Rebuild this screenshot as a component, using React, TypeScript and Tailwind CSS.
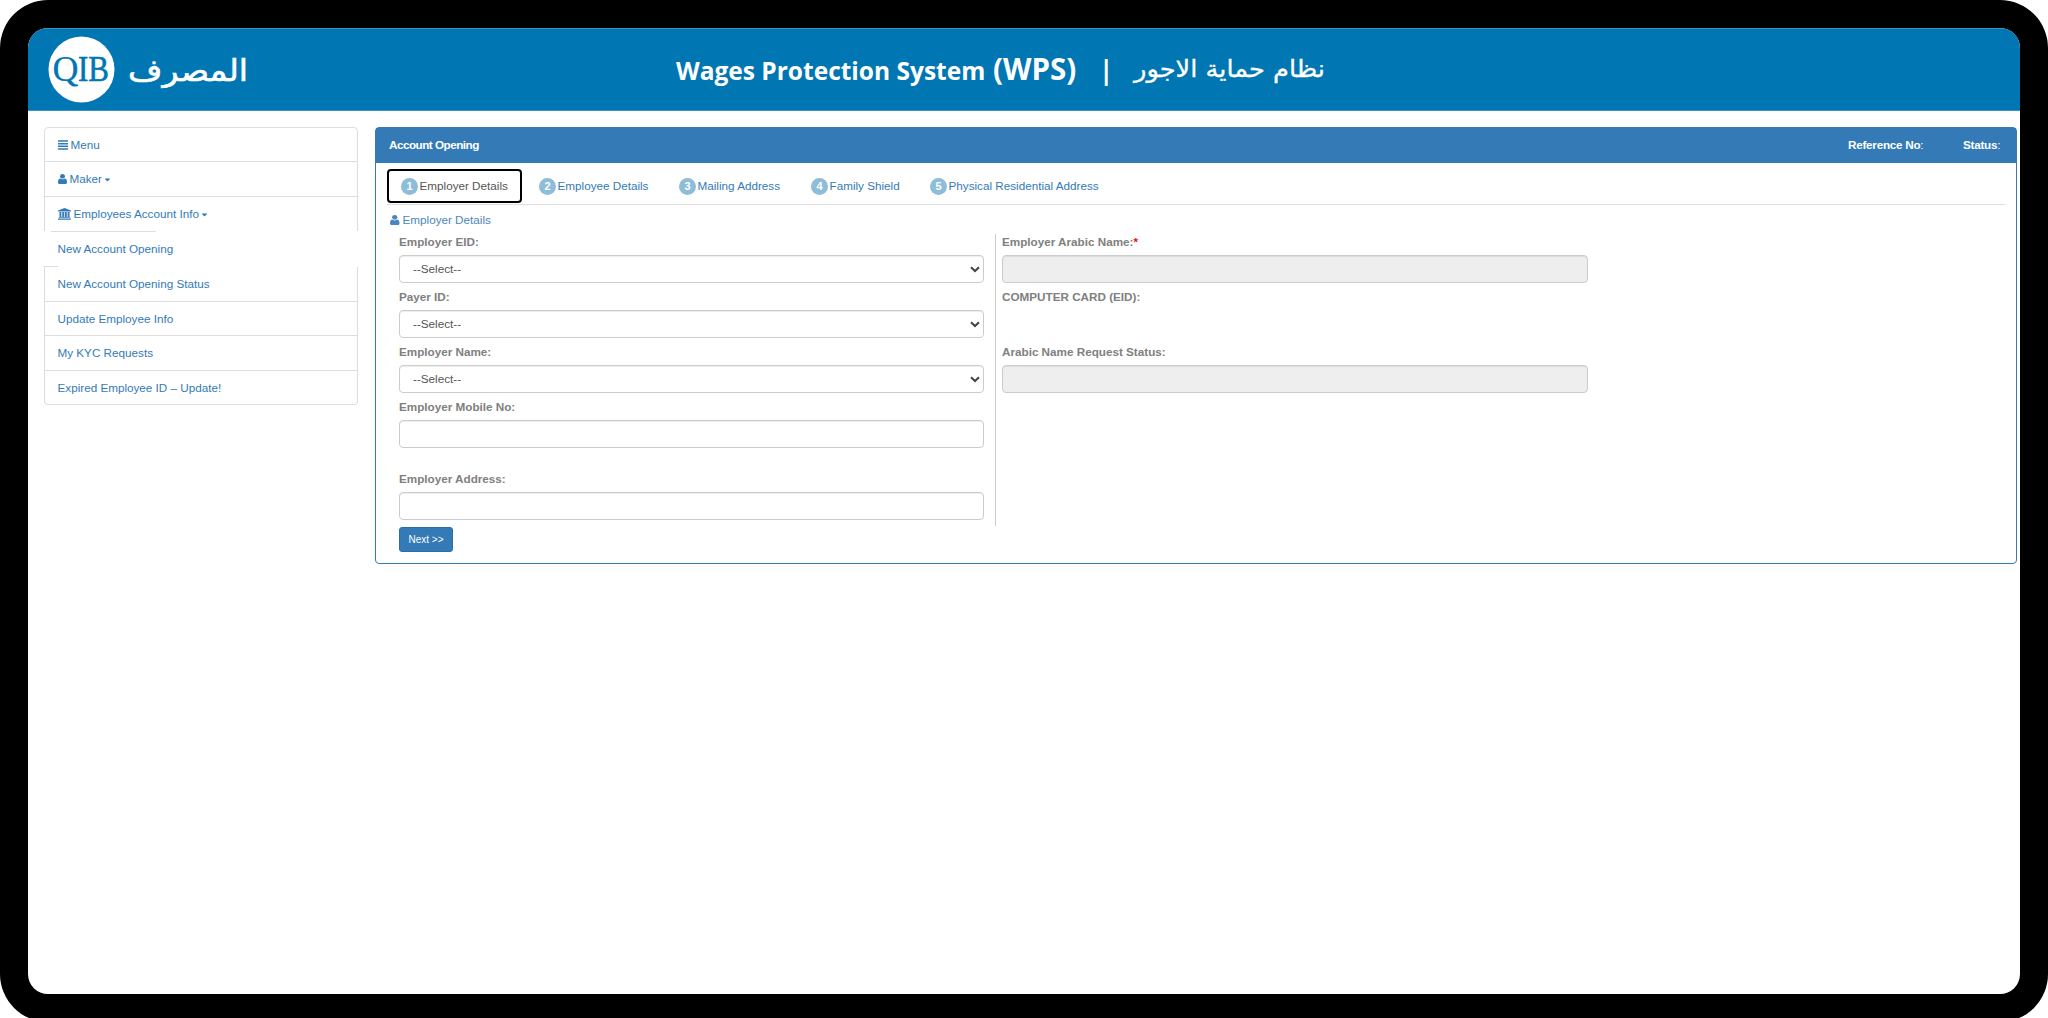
import type { ReactNode } from 'react'
import { FaCaretDown } from 'react-icons/fa'

const STEPS = [
  { label: 'Employer Details', className: 'w-[138px]' },
  { label: 'Employee Details', className: 'w-[140px]' },
  { label: 'Mailing Address', className: 'w-[132px]' },
  { label: 'Family Shield', className: 'w-[119px]' },
  { label: 'Physical Residential Address', className: 'w-[190px]' },
]

function MenuIcon({ className }: { className: string }) {
  return (
    <svg viewBox="0 0 10 10" fill="currentColor" className={className}>
      <path d="M0 .2h10v1.5H0zM0 2.9h10v1.5H0zM0 5.6h10v1.5H0zM0 8.3h10v1.5H0z" />
    </svg>
  )
}

function UserIcon({ className }: { className: string }) {
  return (
    <svg
      viewBox="0 128 1280 1536"
      preserveAspectRatio="none"
      fill="currentColor"
      className={className}
    >
      <circle cx="640" cy="490" r="350" />
      <path d="M1280 1399q0 109-62.5 187t-150.5 78h-854q-88 0-150.5-78t-62.5-187q0-85 8.5-160.5t31.5-152 58.5-131 94-89 134.5-34.5q131 128 313 128t313-128q76 0 134.5 34.5t94 89 58.5 131 31.5 152 8.5 160.5z" />
    </svg>
  )
}

function BankIcon({ className }: { className: string }) {
  return (
    <svg viewBox="0 0 13 12" fill="currentColor" className={className}>
      <path d="M6.5 0 13 2.5v.9H0v-.9zM1.5 4h1.9v5H1.5zM4.3 4h1.9v5H4.3zM6.9 4h1.9v5H6.9zM9.6 4h1.9v5H9.6zM.8 9.2h11.4v.9H.8zM0 10.6h13v1.2H0z" />
    </svg>
  )
}

function Logo() {
  return (
    <svg width="204" height="68" viewBox="0 0 204 68" role="img" aria-label="QIB">
      <circle cx="33.5" cy="33.5" r="33" fill="#fff" />
      <g fill="#0076b3" stroke="#0076b3" fontSize="36" fontFamily="'Liberation Serif', serif">
        <text x="4.5" y="45" strokeWidth="0.2">
          Q
        </text>
        <text
          x="30"
          y="45"
          textLength="31"
          lengthAdjust="spacingAndGlyphs"
          strokeWidth="0.6"
        >
          IB
        </text>
      </g>
      <text
        x="80"
        y="45"
        fontSize="30"
        textLength="120"
        lengthAdjust="spacingAndGlyphs"
        direction="rtl"
        textAnchor="end"
        fill="#fff"
        stroke="#fff"
        strokeWidth="0.6"
        fontFamily="'DejaVu Sans', sans-serif"
      >
        المصرف
      </text>
    </svg>
  )
}

function Header() {
  return (
    <header className="flex h-[83px] border-y border-[#3a93c4] bg-[#0076b3] pl-5 text-white">
      <div className="w-[628px] shrink-0 pt-[7px]">
        <Logo />
      </div>
      <h1 className="flex h-[81px] items-baseline pt-[22px] font-['Open_Sans',sans-serif] font-bold whitespace-nowrap">
        <span className="w-[317px] text-[24.5px] leading-[36px]">Wages Protection System</span>
        <span className="w-[106px] text-[29.5px] leading-[36px]">(WPS)</span>
        <span className="w-[35px] text-[26px] leading-[36px]">|</span>
        <svg width="196" height="40" className="overflow-visible self-start">
          <text
            x="0"
            y="26"
            fontSize="24"
            textLength="191"
            lengthAdjust="spacingAndGlyphs"
            direction="rtl"
            textAnchor="end"
            fill="#fff"
            stroke="#fff"
            strokeWidth="0.3"
            fontWeight="400"
            fontFamily="'DejaVu Sans', sans-serif"
          >
            نظام حماية الاجور
          </text>
        </svg>
      </h1>
    </header>
  )
}

function MenuItem({ children, className }: { children: ReactNode; className: string }) {
  return (
    <li className={`flex items-center border-[#ddd] pl-[12.5px] ${className}`}>
      <a className="flex items-center whitespace-nowrap">{children}</a>
    </li>
  )
}

function SideMenu() {
  return (
    <ul className="w-[314px] shrink-0 text-[#337ab7]">
      <MenuItem className="h-[35px] rounded-t border">
        <MenuIcon className="mr-[3px] size-[10px]" />
        Menu
      </MenuItem>
      <MenuItem className="h-[35px] border-x border-b">
        <UserIcon className="mr-[3px] h-[10px] w-[9px]" />
        Maker
        <FaCaretDown className="ml-px size-[9px]" />
      </MenuItem>
      <MenuItem className="h-[34px] border-x">
        <BankIcon className="mr-[3px] h-[12px] w-[13px]" />
        Employees Account Info
        <FaCaretDown className="ml-px size-[9px]" />
      </MenuItem>
      {/* the open submenu entry covers the list border */}
      <li className="ml-[7px] h-px w-[105px] bg-[#ddd]" />
      <MenuItem className="h-[34px] border-transparent border-x">New Account Opening</MenuItem>
      <li className="h-px w-[14px] bg-[#ddd]" />
      <MenuItem className="h-[35px] border-x border-b">New Account Opening Status</MenuItem>
      <MenuItem className="h-[34px] border-x border-b">Update Employee Info</MenuItem>
      <MenuItem className="h-[35px] border-x border-b">My KYC Requests</MenuItem>
      <MenuItem className="h-[34px] rounded-b border-x border-b">
        Expired Employee ID – Update!
      </MenuItem>
    </ul>
  )
}

function StepTabs() {
  return (
    <nav className="flex h-[42px] border-b border-[#ddd] pt-[6px] text-[#337ab7]">
      {STEPS.map((step, i) => (
        <div key={step.label} className={`shrink-0 ${step.className}`}>
          <div
            className={`flex h-[34px] items-center whitespace-nowrap ${
              i === 0
                ? 'w-[135px] rounded border-2 border-black pl-3 text-[#555]'
                : 'pl-[14px]'
            }`}
          >
            <span className="mr-[1.5px] flex size-[17px] items-center justify-center rounded-full bg-[#8dbdd8] text-[11px] font-bold text-white">
              {i + 1}
            </span>
            {step.label}
          </div>
        </div>
      ))}
    </nav>
  )
}

type FieldProps = {
  label: string
  kind?: 'select' | 'input' | 'disabled' | 'empty'
  required?: boolean
  className?: string
}

function Field({ label, kind = 'input', required, className = 'h-[55px]' }: FieldProps) {
  return (
    <div className={className}>
      <label className="block h-[21px] font-bold leading-[16px] text-[#808080]">
        {label}
        {required && <span className="text-[#f00]">*</span>}
      </label>
      {kind !== 'empty' && (
        <div
          className={`flex h-[28px] items-center justify-between rounded border border-[#ccc] pl-[13px] pr-[3px] text-[#555] shadow-[inset_0_1px_1px_rgba(0,0,0,0.075)] ${
            kind === 'disabled' ? 'bg-[#eee]' : 'bg-white'
          }`}
        >
          {kind === 'select' && (
            <>
              <span>--Select--</span>
              <svg width="10" height="7" viewBox="0 0 10 7" fill="none">
                <path d="M1 1.2 5 5 9 1.2" stroke="#444" strokeWidth="2" />
              </svg>
            </>
          )}
        </div>
      )}
    </div>
  )
}

function AccountPanel() {
  return (
    <main className="h-[437px] w-[1642px] shrink-0 rounded border border-[#337ab7]">
      <div className="flex h-[35px] items-center bg-[#337ab7] pb-px pl-[13px] font-bold tracking-[-0.25px] text-white">
        <h2 className="tracking-[-0.5px]">Account Opening</h2>
        <span className="ml-auto w-[115px]">
          Reference No<span className="font-normal">:</span>
        </span>
        <span className="w-[53px]">
          Status<span className="font-normal">:</span>
        </span>
      </div>
      <div className="pl-[11px] pr-[11px]">
        <StepTabs />
        <h3 className="flex h-[29px] items-center pl-[3px] text-[#4a86bd]">
          <UserIcon className="mr-[3px] h-[10px] w-[9.5px]" />
          Employer Details
        </h3>
        <div className="mb-px flex pl-3">
          <div className="h-[292px] w-[597px] border-r border-[#ccc] pr-[11px]">
            <Field label="Employer EID:" kind="select" />
            <Field label="Payer ID:" kind="select" />
            <Field label="Employer Name:" kind="select" />
            <Field label="Employer Mobile No:" className="h-[72px]" />
            <Field label="Employer Address:" />
          </div>
          <div className="ml-[6px] w-[586px]">
            <Field label="Employer Arabic Name:" kind="disabled" required />
            <Field label="COMPUTER CARD (EID):" kind="empty" />
            <Field label="Arabic Name Request Status:" kind="disabled" />
          </div>
        </div>
        <button className="ml-3 block h-[25px] w-[54px] rounded-[3px] border border-[#2e6da4] bg-[#337ab7] text-[10px] text-white">
          Next &gt;&gt;
        </button>
      </div>
    </main>
  )
}

export default function App() {
  return (
    <div className="h-[1018px] w-[2048px] overflow-hidden bg-white font-['Liberation_Sans',Arial,sans-serif] text-[11.7px] leading-[16px]">
      <div className="h-[1022px] rounded-[48px] bg-black p-[28px]">
        <div className="h-[966px] overflow-hidden rounded-[20px] bg-white">
          <Header />
          <div className="flex gap-[17px] pl-4 pt-4">
            <SideMenu />
            <AccountPanel />
          </div>
        </div>
      </div>
    </div>
  )
}
